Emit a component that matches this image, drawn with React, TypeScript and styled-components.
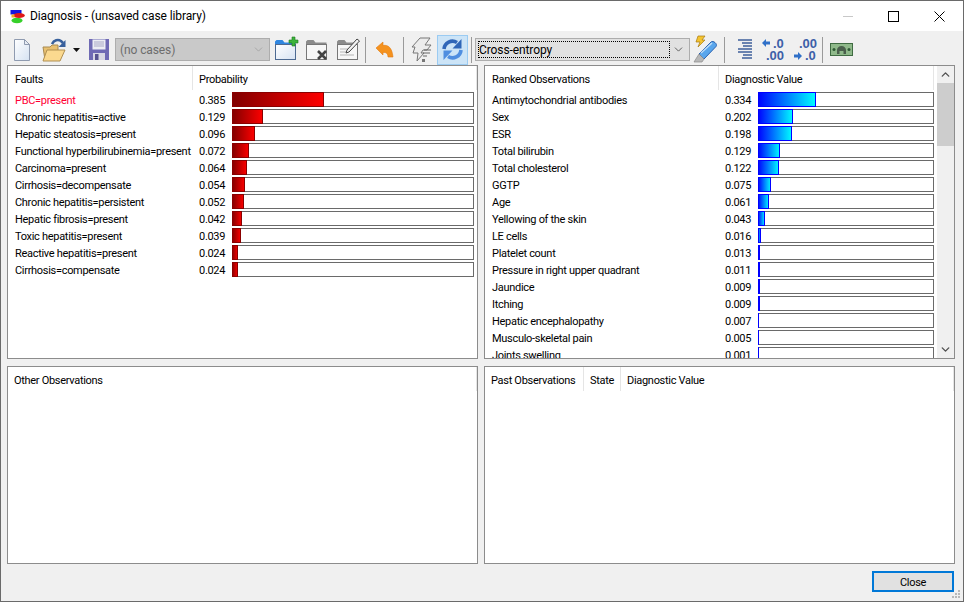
import React from 'react';
import styled, { createGlobalStyle } from 'styled-components';
import { ChevronDown, ChevronUp } from 'lucide-react';

const GlobalStyle = createGlobalStyle`
    html, body {
        margin: 0;
        padding: 0;
        background: #f0f0f0;
    }
    * {
        box-sizing: border-box;
    }
`;

const Window = styled.div`
    position: relative;
    width: 964px;
    height: 602px;
    display: flex;
    flex-direction: column;
    background: #f0f0f0;
    border: 1px solid #6a6a6a;
    font-family: Roboto, "Noto Sans", sans-serif;
    font-size: 11px;
    letter-spacing: -0.3px;
    color: #000;
    overflow: hidden;
`;

const TitleBar = styled.div`
    height: 30px;
    flex-shrink: 0;
    display: flex;
    align-items: center;
    padding-left: 9px;
    background: #fff;
`;

const TitleText = styled.span`
    margin-left: 5px;
    padding-bottom: 1px;
    font-size: 12px;
    letter-spacing: -0.1px;
    color: #000;
`;

const WindowButtons = styled.div`
    margin-left: auto;
    display: flex;
    align-items: center;
    padding-right: 18px;
    gap: 35px;
`;

const Toolbar = styled.div`
    height: 34px;
    flex-shrink: 0;
    display: flex;
    align-items: center;
    padding: 3px 0 0 12px;
`;

const ToolIcon = styled.svg<{ $ml?: number }>`
    flex-shrink: 0;
    margin-left: ${p => p.$ml ?? 0}px;
    overflow: visible;
`;

const Separator = styled.div<{ $ml: number }>`
    width: 1px;
    height: 26px;
    flex-shrink: 0;
    margin-left: ${p => p.$ml}px;
    background: #9a9a9a;
`;

const ActiveTool = styled.div`
    width: 31px;
    height: 30px;
    flex-shrink: 0;
    margin-left: 4px;
    display: flex;
    align-items: center;
    justify-content: center;
    background: #cce4f7;
    border: 1px solid #9bcbf2;
`;

const Combo = styled.div<{ $width: number; $ml: number; $disabled?: boolean }>`
    width: ${p => p.$width}px;
    height: 23px;
    flex-shrink: 0;
    margin-left: ${p => p.$ml}px;
    display: flex;
    align-items: center;
    padding: 2px;
    background: ${p => (p.$disabled ? '#c9c9c9' : '#e1e1e1')};
    border: 1px solid #adadad;
    font-size: 12px;
    letter-spacing: -0.1px;
    color: ${p => (p.$disabled ? '#6d6d6d' : '#000')};
`;

const ComboText = styled.div<{ $focused?: boolean }>`
    flex: 1;
    height: 100%;
    display: flex;
    align-items: center;
    padding-left: ${p => (p.$focused ? 0 : 1)}px;
    border: 1px ${p => (p.$focused ? 'dotted #000' : 'solid transparent')};
`;

const ComboArrow = styled.div<{ $muted?: boolean }>`
    width: 17px;
    display: flex;
    align-items: center;
    justify-content: center;
    color: ${p => (p.$muted ? '#a0a0a0' : '#444')};
`;

const Content = styled.div`
    flex: 1;
    display: grid;
    grid-template-columns: 471px 471px;
    grid-template-rows: 294px 198px;
    column-gap: 6px;
    row-gap: 7px;
    padding-left: 6px;
`;

const Panel = styled.div`
    background: #fff;
    border: 1px solid #8c8c8c;
    overflow: hidden;
    display: flex;
    min-height: 0;
`;

const PanelBody = styled.div`
    flex: 1;
    min-width: 0;
    display: flex;
    flex-direction: column;
`;

const HeaderRow = styled.div`
    height: 26px;
    flex-shrink: 0;
    display: flex;
`;

const HeaderCell = styled.div<{ $width?: number; $pad?: number }>`
    width: ${p => (p.$width ? `${p.$width}px` : 'auto')};
    height: 24px;
    flex: ${p => (p.$width ? 'none' : 1)};
    padding: 7px 0 0 ${p => p.$pad ?? 6}px;
    white-space: nowrap;
    border-right: 1px solid #e5e5e5;
`;

const Rows = styled.div`
    display: flex;
    flex-direction: column;
    gap: 2px;
`;

const Row = styled.div<{ $nameWidth: number; $barWidth: number }>`
    height: 15px;
    flex-shrink: 0;
    display: grid;
    grid-template-columns: ${p => p.$nameWidth}px 33px ${p => p.$barWidth}px;
    align-items: start;
    padding-left: 7px;
    line-height: 17px;
`;

const RowName = styled.span<{ $top?: boolean }>`
    white-space: nowrap;
    color: ${p => (p.$top ? '#ff0033' : '#000')};
`;

const RowValue = styled.span``;

const Bar = styled.div`
    height: 15px;
    background: #fff;
    border: 1px solid #6a6a6a;
    display: flex;
`;

const BarFill = styled.div<{ $kind: 'red' | 'blue' }>`
    height: 15px;
    margin: -1px 0 0 -1px;
    box-shadow: inset 0 0 0 1px ${p => (p.$kind === 'red' ? '#8a0000' : '#0000ff')};
    background: ${p =>
        p.$kind === 'red'
            ? 'linear-gradient(to right, #800000, #ff0000)'
            : 'linear-gradient(to right, #0000ff, #00ffff)'};
`;

const ScrollBar = styled.div`
    width: 17px;
    margin-left: 3px;
    flex-shrink: 0;
    display: flex;
    flex-direction: column;
    background: #f0f0f0;
`;

const ScrollArrow = styled.div`
    height: 17px;
    flex-shrink: 0;
    display: flex;
    align-items: center;
    justify-content: center;
    color: #505050;
`;

const ScrollThumb = styled.div`
    height: 63px;
    flex-shrink: 0;
    background: #cdcdcd;
`;

const ScrollTrack = styled.div`
    flex: 1;
`;

const Footer = styled.div`
    height: 37px;
    flex-shrink: 0;
    display: flex;
    justify-content: flex-end;
    align-items: flex-start;
    padding: 7px 9px 0 0;
`;

const CloseButton = styled.button`
    width: 82px;
    height: 21px;
    padding: 2px 0 0;
    background: #e1e1e1;
    border: 2px solid #0078d7;
    font: inherit;
    letter-spacing: inherit;
    color: #000;
`;

const Grip = styled.svg`
    position: absolute;
    right: 2px;
    bottom: 2px;
`;

const faults: [string, number][] = [
    ['PBC=present', 0.385],
    ['Chronic hepatitis=active', 0.129],
    ['Hepatic steatosis=present', 0.096],
    ['Functional hyperbilirubinemia=present', 0.072],
    ['Carcinoma=present', 0.064],
    ['Cirrhosis=decompensate', 0.054],
    ['Chronic hepatitis=persistent', 0.052],
    ['Hepatic fibrosis=present', 0.042],
    ['Toxic hepatitis=present', 0.039],
    ['Reactive hepatitis=present', 0.024],
    ['Cirrhosis=compensate', 0.024],
];

const observations: [string, number][] = [
    ['Antimytochondrial antibodies', 0.334],
    ['Sex', 0.202],
    ['ESR', 0.198],
    ['Total bilirubin', 0.129],
    ['Total cholesterol', 0.122],
    ['GGTP', 0.075],
    ['Age', 0.061],
    ['Yellowing of the skin', 0.043],
    ['LE cells', 0.016],
    ['Platelet count', 0.013],
    ['Pressure in right upper quadrant', 0.011],
    ['Jaundice', 0.009],
    ['Itching', 0.009],
    ['Hepatic encephalopathy', 0.007],
    ['Musculo-skeletal pain', 0.005],
    ['Joints swelling', 0.001],
];

const BarRow: React.FC<{
    name: string;
    value: number;
    kind: 'red' | 'blue';
    nameWidth: number;
    barWidth: number;
    top?: boolean;
}> = ({ name, value, kind, nameWidth, barWidth, top }) => (
    <Row $nameWidth={nameWidth} $barWidth={barWidth}>
        <RowName $top={top}>{name}</RowName>
        <RowValue>{value.toFixed(3)}</RowValue>
        <Bar>
            <BarFill $kind={kind} style={{ width: Math.max(1, Math.round(value * (barWidth - 2))) }} />
        </Bar>
    </Row>
);

const AppLogo = () => (
    <ToolIcon width="15" height="15" viewBox="0 0 15 15">
        <ellipse cx="7" cy="11.5" rx="5.5" ry="2.8" fill="#36d02a" />
        <rect x="0.5" y="1" width="11" height="4.5" fill="#1414e0" />
        <ellipse cx="9" cy="6.6" rx="5.8" ry="2.5" fill="#e01818" />
        <rect x="1.5" y="5.5" width="3" height="3" fill="#f0b020" />
    </ToolIcon>
);

const NewDocIcon = () => (
    <ToolIcon width="18" height="24" viewBox="0 0 18 24">
        <defs>
            <linearGradient id="doc" x1="0" y1="0" x2="1" y2="1">
                <stop offset="0" stopColor="#ffffff" />
                <stop offset="1" stopColor="#d5e2f2" />
            </linearGradient>
        </defs>
        <path d="M1.5 1.5h10l5 5v16h-15z" fill="url(#doc)" stroke="#8f9bb0" />
        <path d="M11.5 1.5v5h5z" fill="#e6ecf4" stroke="#8f9bb0" />
    </ToolIcon>
);

const OpenIcon = () => (
    <ToolIcon $ml={11} width="24" height="24" viewBox="0 0 24 24">
        <path d="M1 9h7l2-2h6v15H3z" fill="#e8c070" stroke="#a88a50" />
        <path d="M1 23l4-11h18l-5 11z" fill="#fbd98f" stroke="#b08f50" />
        <path d="M10 6c2-4 6-5 9-3l2 2" fill="none" stroke="#38609c" strokeWidth="2.6" />
        <path d="M23.5 2v7h-7z" fill="#38609c" />
    </ToolIcon>
);

const DropArrow = () => (
    <ToolIcon $ml={7} width="7" height="4" viewBox="0 0 7 4">
        <path d="M0 0h7L3.5 4z" fill="#111" />
    </ToolIcon>
);

const SaveIcon = () => (
    <ToolIcon $ml={9} width="20" height="21" viewBox="0 0 20 21">
        <path d="M0 0h20v21H0z" fill="#6f6ab4" />
        <rect x="3.5" y="0.5" width="13" height="10" fill="#ecedf3" />
        <path d="M5 3h10M5 5h10M5 7h10" stroke="#a9a9c6" />
        <rect x="4" y="14" width="12" height="7" fill="#d8d8e4" />
        <rect x="6" y="15" width="3.5" height="6" fill="#57538f" />
    </ToolIcon>
);

const FolderShape: React.FC<{ tab: string; body: string; line: string }> = ({ tab, body, line }) => (
    <>
        <path d="M1 7V4.500L2.500 3h6l2 2.500h11V8H1z" fill={tab} />
        <rect x="1.500" y="7.500" width="20" height="15" fill={body} stroke={line} />
    </>
);

const FolderAddIcon = () => (
    <ToolIcon $ml={4} width="24" height="25" viewBox="0 0 24 25">
        <defs>
            <linearGradient id="fold" x1="0" y1="0" x2="1" y2="1">
                <stop offset="0" stopColor="#ffffff" />
                <stop offset="1" stopColor="#d7e3f3" />
            </linearGradient>
        </defs>
        <FolderShape tab="#2f86e0" body="url(#fold)" line="#4d6a92" />
        <path d="M15 3h3V0h3v3h3v3h-3v3h-3V6h-3z" fill="#3cb43c" stroke="#1d7a1d" strokeWidth="0.6" />
    </ToolIcon>
);

const FolderDeleteIcon = () => (
    <ToolIcon $ml={7} width="24" height="25" viewBox="0 0 24 25">
        <FolderShape tab="#8b8b8b" body="#f7f7f7" line="#777" />
        <path d="M13 14l8 8M21 14l-8 8" stroke="#444" strokeWidth="2.600" />
    </ToolIcon>
);

const FolderEditIcon = () => (
    <ToolIcon $ml={7} width="24" height="25" viewBox="0 0 24 25">
        <FolderShape tab="#8b8b8b" body="#f7f7f7" line="#777" />
        <path d="M4 12h10M4 15h8M4 18h14" stroke="#b5b5b5" />
        <path d="M11 13L21 2l2.500 2L13 15l-3 1z" fill="#f2f2f2" stroke="#444" />
    </ToolIcon>
);

const UndoIcon = () => (
    <ToolIcon $ml={10} width="17" height="15" viewBox="0 0 17 15">
        <path d="M0 6L7 0v3.500c5-1 9 2 10 11.500h-5c0-3-1.500-5-5-4.500V13z" fill="#f5921e" stroke="#e07a10" strokeWidth="0.6" />
    </ToolIcon>
);

const BoltIcon = () => (
    <ToolIcon $ml={7} width="22" height="24" viewBox="0 0 22 24">
        <path d="M9 0h10l-5 7h6l-4 5h-4l-2 3h3l-7 8 1-8H2l2-6H1z" fill="#ececec" stroke="#777" />
        <path d="M13 12h7M12 15h7M12 18h4" stroke="#666" />
        <rect x="11" y="21" width="3" height="3" fill="#777" />
    </ToolIcon>
);

const RefreshIcon = () => (
    <ToolIcon width="23" height="23" viewBox="0 0 23 23">
        <path d="M3 11A8.500 8.500 0 0 1 16 4.500" fill="none" stroke="#2f66b8" strokeWidth="3.600" />
        <path d="M20.500 1V10.500h-9z" fill="#2f66b8" />
        <path d="M20 12A8.500 8.500 0 0 1 7 18.500" fill="none" stroke="#4f8ee0" strokeWidth="3.600" />
        <path d="M2.500 22V12.500h9z" fill="#4f8ee0" />
    </ToolIcon>
);

const HighlighterIcon = () => (
    <ToolIcon $ml={4} width="24" height="27" viewBox="0 0 24 27">
        <path d="M4 0h7L8 4h3l-7 7 2-5H2z" fill="#f4c430" stroke="#a87a10" strokeWidth="0.7" />
        <path d="M5 18L17 6c2-2 7 2 5 4.500L10 23z" fill="#5aa6ec" stroke="#2a62b0" />
        <path d="M7 17L18 7" stroke="#bcdcf8" strokeWidth="1.500" />
        <path d="M5 18l-5 8h8l2-3z" fill="#b8b8b8" stroke="#8a8a8a" strokeWidth="0.7" />
    </ToolIcon>
);

const AlignIcon = () => (
    <ToolIcon $ml={13} width="14" height="21" viewBox="0 0 14 21">
        <path d="M0 1h14M4 4h10M5 7h9M0 10h14M0 13h14M5 16h9M4 19h10" stroke="#3e5f9a" strokeWidth="1.700" />
    </ToolIcon>
);

const DecimalText = styled.text`
    font-family: "Liberation Sans", sans-serif;
    font-size: 13px;
    font-weight: 700;
    letter-spacing: 0;
    fill: #3d5fa8;
`;

const DecreaseIcon = () => (
    <ToolIcon $ml={10} width="24" height="24" viewBox="0 0 24 24">
        <path d="M0 5l4-4v2.500h4v3H4V9z" fill="#2f70c8" />
        <DecimalText x="11" y="10">.0</DecimalText>
        <DecimalText x="4" y="22">.00</DecimalText>
    </ToolIcon>
);

const IncreaseIcon = () => (
    <ToolIcon $ml={8} width="22" height="24" viewBox="0 0 22 24">
        <DecimalText x="5" y="10">.00</DecimalText>
        <path d="M8 18l-4 4v-2.500H0v-3h4V14z" fill="#2f70c8" />
        <DecimalText x="11" y="22">.0</DecimalText>
    </ToolIcon>
);

const MoneyIcon = () => (
    <ToolIcon $ml={7} width="23" height="13" viewBox="0 0 23 13">
        <rect width="23" height="13" fill="#8fb98a" />
        <rect x="0.500" y="0.500" width="22" height="12" fill="none" stroke="#3f6b42" />
        <circle cx="4" cy="6.500" r="1.500" fill="#2e5a34" />
        <circle cx="19" cy="6.500" r="1.500" fill="#2e5a34" />
        <path d="M7 11V7c0-2 2-4 4.500-4S16 5 16 7v4h-2.500V8h-4v3z" fill="#4a5f4c" />
    </ToolIcon>
);

const App: React.FC = () => (
    <Window>
        <GlobalStyle />
        <TitleBar>
            <AppLogo />
            <TitleText>Diagnosis - (unsaved case library)</TitleText>
            <WindowButtons>
                <ToolIcon width="10" height="10" viewBox="0 0 10 10">
                    <path d="M0 5.500h10" stroke="#c8c8c8" />
                </ToolIcon>
                <ToolIcon width="11" height="11" viewBox="0 0 11 11">
                    <rect x="0.500" y="0.500" width="10" height="10" fill="none" stroke="#000" />
                </ToolIcon>
                <ToolIcon width="11" height="11" viewBox="0 0 11 11">
                    <path d="M0.500 0.500l10 10M10.500 0.500l-10 10" stroke="#000" />
                </ToolIcon>
            </WindowButtons>
        </TitleBar>
        <Toolbar>
            <NewDocIcon />
            <OpenIcon />
            <DropArrow />
            <SaveIcon />
            <Combo $width={155} $ml={6} $disabled>
                <ComboText>(no cases)</ComboText>
                <ComboArrow $muted><ChevronDown size={13} strokeWidth={1.5} /></ComboArrow>
            </Combo>
            <FolderAddIcon />
            <FolderDeleteIcon />
            <FolderEditIcon />
            <Separator $ml={5} />
            <UndoIcon />
            <Separator $ml={10} />
            <BoltIcon />
            <ActiveTool><RefreshIcon /></ActiveTool>
            <Separator $ml={3} />
            <Combo $width={215} $ml={3}>
                <ComboText $focused>Cross-entropy</ComboText>
                <ComboArrow><ChevronDown size={13} strokeWidth={1.5} /></ComboArrow>
            </Combo>
            <HighlighterIcon />
            <Separator $ml={6} />
            <AlignIcon />
            <DecreaseIcon />
            <IncreaseIcon />
            <Separator $ml={6} />
            <MoneyIcon />
        </Toolbar>
        <Content>
            <Panel>
                <PanelBody>
                    <HeaderRow>
                        <HeaderCell $width={185} $pad={7}>Faults</HeaderCell>
                        <HeaderCell>Probability</HeaderCell>
                    </HeaderRow>
                    <Rows>
                        {faults.map(([name, value], i) => (
                            <BarRow key={name} name={name} value={value} kind="red" nameWidth={184} barWidth={242} top={i === 0} />
                        ))}
                    </Rows>
                </PanelBody>
            </Panel>
            <Panel>
                <PanelBody>
                    <HeaderRow>
                        <HeaderCell $width={234} $pad={7}>Ranked Observations</HeaderCell>
                        <HeaderCell>Diagnostic Value</HeaderCell>
                    </HeaderRow>
                    <Rows>
                        {observations.map(([name, value]) => (
                            <BarRow key={name} name={name} value={value} kind="blue" nameWidth={233} barWidth={176} />
                        ))}
                    </Rows>
                </PanelBody>
                <ScrollBar>
                    <ScrollArrow><ChevronUp size={13} strokeWidth={2.5} /></ScrollArrow>
                    <ScrollThumb />
                    <ScrollTrack />
                    <ScrollArrow><ChevronDown size={13} strokeWidth={2.5} /></ScrollArrow>
                </ScrollBar>
            </Panel>
            <Panel>
                <PanelBody>
                    <HeaderRow>
                        <HeaderCell>Other Observations</HeaderCell>
                    </HeaderRow>
                </PanelBody>
            </Panel>
            <Panel>
                <PanelBody>
                    <HeaderRow>
                        <HeaderCell $width={99}>Past Observations</HeaderCell>
                        <HeaderCell $width={37}>State</HeaderCell>
                        <HeaderCell>Diagnostic Value</HeaderCell>
                    </HeaderRow>
                </PanelBody>
            </Panel>
        </Content>
        <Footer>
            <CloseButton>Close</CloseButton>
        </Footer>
        <Grip width="9" height="9" viewBox="0 0 9 9">
            <path d="M6 0h2v2H6zM3 3h2v2H3zM6 3h2v2H6zM0 6h2v2H0zM3 6h2v2H3zM6 6h2v2H6z" fill="#b8b8b8" />
        </Grip>
    </Window>
);

export default App;
